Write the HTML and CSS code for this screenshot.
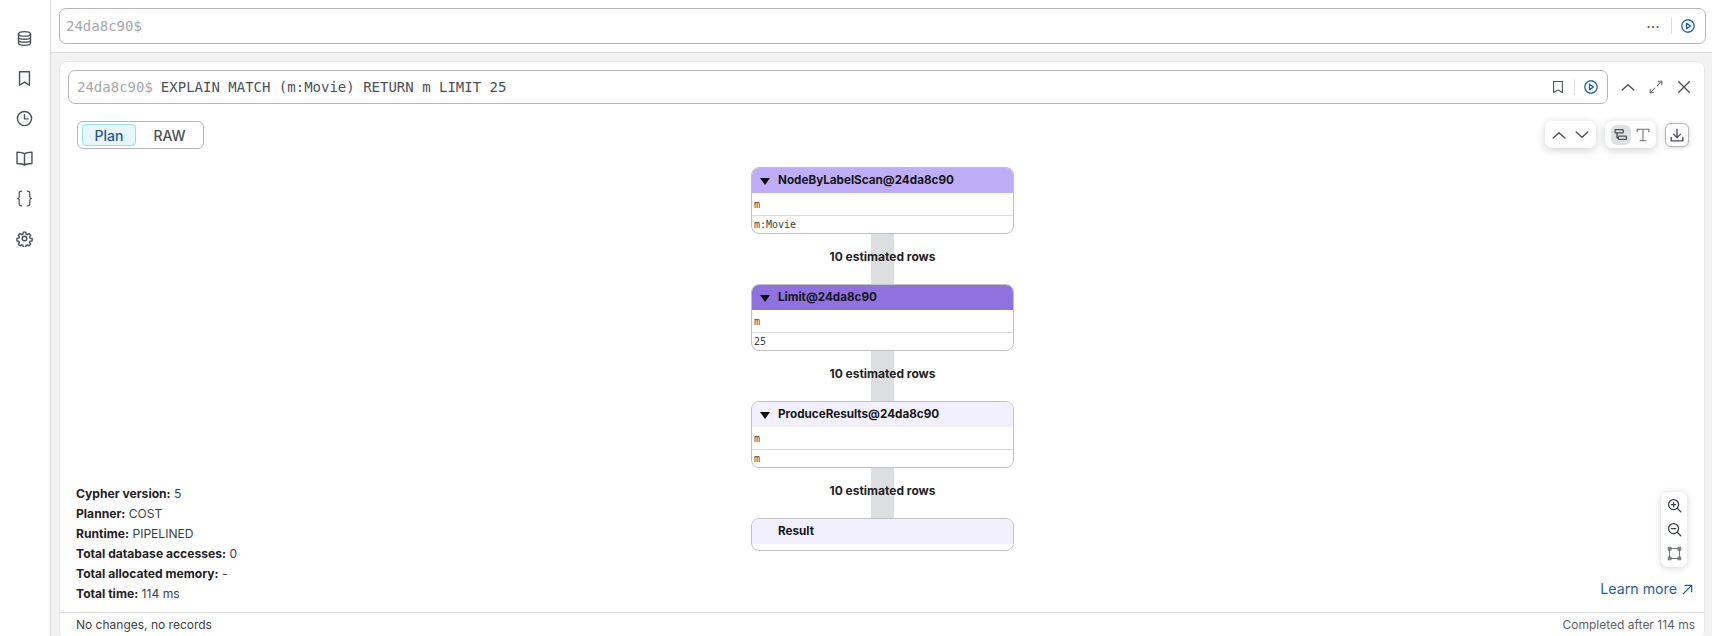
FILE: index.html
```html
<!DOCTYPE html>
<html lang="en">
<head>
<meta charset="utf-8">
<title>Query plan</title>
<link rel="stylesheet" href="styles.css">
</head>
<body>
<div class="app">
  <nav class="sidebar">
    <svg class="nav-icon" viewBox="0 0 24 24"><ellipse cx="12" cy="5.5" rx="8.5" ry="3.2"/><path d="M3.5 5.5v13c0 1.800 3.800 3.200 8.500 3.200s8.500-1.400 8.500-3.200v-13M3.500 9.800c0 1.800 3.800 3.200 8.500 3.200s8.500-1.400 8.500-3.200M3.500 14.200c0 1.800 3.800 3.200 8.500 3.200s8.500-1.400 8.500-3.200"/></svg>
    <svg class="nav-icon" viewBox="0 0 24 24"><path d="M5 2.500h14v19l-7-4.500-7 4.500z"/></svg>
    <svg class="nav-icon" viewBox="0 0 24 24"><circle cx="12" cy="12" r="10"/><path d="M12 6.500V12.500h5"/></svg>
    <svg class="nav-icon" viewBox="0 0 24 24"><path d="M12 5.500C10 3.800 6 3 1.500 3v16c4.500 0 8.500.6 10.500 2.500 2-1.900 6-2.500 10.500-2.500V3C18 3 14 3.800 12 5.500zM12 5.500v16"/></svg>
    <svg class="nav-icon nav-thin" viewBox="0 0 24 24"><path d="M8 1.500c-2.500 0-3.500 1-3.500 3v5c0 1.500-.8 2.500-2.500 2.500 1.700 0 2.500 1 2.500 2.500v5c0 2 1 3 3.500 3M16 1.500c2.500 0 3.500 1 3.500 3v5c0 1.500.8 2.500 2.500 2.500-1.700 0-2.500 1-2.500 2.500v5c0 2-1 3-3.500 3"/></svg>
    <svg class="nav-icon" viewBox="0 0 24 24"><circle cx="12" cy="12" r="3.200"/><path d="M10.300 3h3.400l.5 2.700 1.800.8 2.300-1.500 2.400 2.400-1.500 2.300.8 1.800 2.700.5v3.400l-2.700.5-.8 1.800 1.500 2.300-2.400 2.400-2.300-1.500-1.800.8-.5 2.700h-3.400l-.5-2.700-1.800-.8-2.300 1.500-2.400-2.400 1.500-2.300-.8-1.800-2.700-.5v-3.400l2.700-.5.8-1.800-1.500-2.300 2.400-2.400 2.300 1.500 1.800-.8z"/></svg>
  </nav>
  <main class="main">
    <header class="topbar">
      <div class="editor editor-top">
        <span class="prompt">24da8c90$</span>
        <span class="spacer"></span>
        <span class="dots">···</span>
        <span class="divider"></span>
        <svg class="run" viewBox="0 0 24 24"><circle cx="12" cy="12" r="10.500" stroke-dasharray="3 .6"/><path d="M9.500 7.500l7 4.500-7 4.500z"/></svg>
      </div>
    </header>
    <section class="content">
      <article class="card">
        <div class="card-head">
          <div class="editor editor-inner">
            <span class="prompt">24da8c90$</span>
            <span class="query">EXPLAIN MATCH (m:Movie) RETURN m LIMIT 25</span>
            <span class="spacer"></span>
            <svg class="tool-icon" viewBox="0 0 24 24"><path d="M4.500 2.500h15v19l-7.500-4.500-7.500 4.500z"/></svg>
            <span class="divider divider-inner"></span>
            <svg class="run" viewBox="0 0 24 24"><circle cx="12" cy="12" r="10.500" stroke-dasharray="3 .6"/><path d="M9.500 7.500l7 4.500-7 4.500z"/></svg>
          </div>
          <div class="head-actions">
            <svg class="tool-icon tool-bold" viewBox="0 0 24 24"><path d="M2 17l10-9 10 9"/></svg>
            <svg class="tool-icon tool-light" viewBox="0 0 24 24"><path d="M14 10l8-8M16 2h6v6M10 14l-8 8M2 16v6h6"/></svg>
            <svg class="tool-icon tool-bold" viewBox="0 0 24 24"><path d="M3 3l18 18M21 3L3 21"/></svg>
          </div>
        </div>
        <div class="plan-area">
          <div class="tabs">
            <span class="tab tab-active">Plan</span>
            <span class="tab">RAW</span>
          </div>
          <div class="tools">
            <div class="tool-group">
              <svg class="tool-icon tool-bold" viewBox="0 0 24 24"><path d="M2 17l10-9 10 9"/></svg>
              <svg class="tool-icon tool-bold" viewBox="0 0 24 24"><path d="M2 7l10 9 10-9"/></svg>
            </div>
            <div class="tool-group">
              <span class="tool-on"><svg class="tool-icon tool-bold" viewBox="0 0 24 24"><rect x="2" y="3" width="15" height="6" rx="1"/><rect x="8" y="15" width="15" height="6" rx="1"/><path d="M5.500 9v9H8"/></svg></span>
              <svg class="tool-icon tool-light" viewBox="0 0 24 24"><path d="M2 6V2h20v4M12 2v20M7 22h10"/></svg>
            </div>
            <div class="tool-single">
              <svg class="tool-icon tool-bold" viewBox="0 0 24 24"><path d="M12 2v14M6 10.500l6 6 6-6M2 16v6h20v-6"/></svg>
            </div>
          </div>
          <div class="plan">
            <div class="node">
              <div class="node-head head-scan"><span class="caret"></span>NodeByLabelScan@24da8c90</div>
              <div class="node-row">m</div>
              <div class="node-row row-last">m:Movie</div>
            </div>
            <div class="edge"><span class="edge-label">10 estimated rows</span></div>
            <div class="node">
              <div class="node-head head-limit"><span class="caret"></span>Limit@24da8c90</div>
              <div class="node-row">m</div>
              <div class="node-row row-last">25</div>
            </div>
            <div class="edge"><span class="edge-label">10 estimated rows</span></div>
            <div class="node">
              <div class="node-head head-light"><span class="caret"></span>ProduceResults@24da8c90</div>
              <div class="node-row">m</div>
              <div class="node-row row-last">m</div>
            </div>
            <div class="edge"><span class="edge-label">10 estimated rows</span></div>
            <div class="node node-result">
              <div class="node-head head-light"><span class="caret caret-none"></span>Result</div>
            </div>
          </div>
          <dl class="stats">
            <div><dt>Cypher version:</dt> <dd>5</dd></div>
            <div><dt>Planner:</dt> <dd>COST</dd></div>
            <div><dt>Runtime:</dt> <dd>PIPELINED</dd></div>
            <div><dt>Total database accesses:</dt> <dd>0</dd></div>
            <div><dt>Total allocated memory:</dt> <dd>-</dd></div>
            <div><dt>Total time:</dt> <dd>114 ms</dd></div>
          </dl>
          <div class="zoom-group">
            <svg class="zoom-icon" viewBox="0 0 24 24"><circle cx="10.500" cy="10.500" r="8"/><path d="M16.500 16.500l5.500 5.500M7 10.500h7M10.500 7v7"/></svg>
            <svg class="zoom-icon" viewBox="0 0 24 24"><circle cx="10.500" cy="10.500" r="8"/><path d="M16.500 16.500l5.500 5.500M7 10.500h7"/></svg>
            <svg class="zoom-icon zoom-fit" viewBox="0 0 24 24"><rect x="4" y="4" width="16" height="16" stroke-dasharray="2 1.500"/><rect x="2" y="2" width="4.500" height="4.500" rx="1"/><rect x="17.500" y="2" width="4.500" height="4.500" rx="1"/><rect x="2" y="17.500" width="4.500" height="4.500" rx="1"/><rect x="17.500" y="17.500" width="4.500" height="4.500" rx="1"/></svg>
          </div>
          <a class="learn">Learn more <svg class="learn-icon" viewBox="0 0 12 12"><path d="M1.500 10.500l9-9M3.500 1.500h7v7"/></svg></a>
        </div>
        <footer class="status">
          <span>No changes, no records</span>
          <span class="status-right">Completed after 114 ms</span>
        </footer>
      </article>
    </section>
  </main>
</div>
</body>
</html>
```
FILE: styles.css
```css
* { box-sizing: border-box; }
html, body { margin: 0; height: 100%; }
body { font-family: "Inter", "Liberation Sans", sans-serif; color: #2b2f36; background: #fff; overflow: hidden; }
svg { fill: none; stroke: currentColor; stroke-width: 1.8; stroke-linecap: round; stroke-linejoin: round; flex: none; display: block; }

.app { display: flex; height: 636px; }

.sidebar { width: 51px; flex: none; border-right: 1px solid #dcdde0; display: flex; flex-direction: column; align-items: center; gap: 23px; padding-top: 30px; padding-right: 1px; }
.nav-icon { width: 17px; height: 17px; color: #4d5157; stroke-width: 2; }
.nav-thin { stroke-width: 1.7; }

.main { flex: 1; min-width: 0; display: flex; flex-direction: column; }
.topbar { height: 53px; flex: none; padding: 8px 6px 0 8px; border-bottom: 1px solid #dcdde0; }
.content { flex: 1; background: #f2f2f3; padding: 8px 7px 0 8px; min-height: 0; }

.editor { display: flex; align-items: center; border: 1px solid #b4b6bb; border-radius: 7px; background: #fff; font-family: "DejaVu Sans Mono", "Liberation Mono", monospace; font-size: 14px; }
.editor-top { height: 36px; padding: 0 10px 0 6px; }
.prompt { color: #a6a8ae; }
.query { color: #4d5157; margin-left: 8px; }
.spacer { flex: 1; }
.dots { color: #5a5e65; font-family: "Inter", sans-serif; font-size: 12px; font-weight: 700; letter-spacing: .5px; }
.divider { width: 1px; height: 16px; background: #dcdde0; margin: 0 9px 0 11px; }
.divider-inner { margin: 0 9px 0 9px; }
.run { width: 14px; height: 14px; color: #1f5f96; stroke-width: 2.2; }

.card { height: 100%; background: #fff; border: 1px solid #e8e8ea; border-bottom: 0; border-radius: 8px 8px 5px 5px; display: flex; flex-direction: column; }
.card-head { display: flex; align-items: center; padding: 8px 0 0 8px; flex: none; }
.editor-inner { flex: 1; height: 34px; padding: 0 9px 0 8px; }
.head-actions { width: 96px; flex: none; display: flex; gap: 14px; padding-left: 13px; }
.tool-icon { width: 14px; height: 14px; color: #4d5157; }
.tool-bold { stroke-width: 2.4; }
.tool-light { color: #6a6e75; }

.plan-area { position: relative; flex: 1; min-height: 0; }

.tabs { position: absolute; left: 17px; top: 17px; width: 127px; height: 28px; border: 1px solid #b4b6bb; border-radius: 6px; display: flex; align-items: center; padding-left: 4px; font-size: 14px; font-weight: 500; background: #fff; }
.tab { width: 54px; height: 22px; flex: none; display: flex; align-items: center; justify-content: center; color: #4d5157; }
.tab + .tab { width: 67px; }
.tab-active { background: #e7f6fb; border: 1px solid #99dfeb; border-radius: 4px; color: #1f5a8a; }

.tools { position: absolute; right: 15px; top: 17px; display: flex; align-items: center; gap: 9px; }
.tool-group { width: 51px; height: 27px; background: #fff; border-radius: 7px; box-shadow: 0 2px 8px rgba(30, 35, 45, .22); display: flex; align-items: center; justify-content: space-around; padding: 0 3px; }
.tool-on { width: 20px; height: 20px; border-radius: 6px; background: #dfe0e2; display: flex; align-items: center; justify-content: center; }
.tool-on .tool-icon { width: 13px; height: 13px; }
.tool-single { width: 24px; height: 24px; border: 1px solid #b4b6bb; border-radius: 6px; background: #fff; display: flex; align-items: center; justify-content: center; box-shadow: 0 1px 4px rgba(30, 35, 45, .18); }

.plan { position: absolute; top: 63px; left: 691px; width: 263px; display: flex; flex-direction: column; }
.node { border: 1px solid #c1c1c8; border-radius: 8px; overflow: hidden; background: #fff; position: relative; }
.node-head { height: 25px; display: flex; align-items: center; font-size: 11.700px; font-weight: 700; color: #14161a; line-height: 1; padding-top: 1px; }
.caret { width: 0; height: 0; margin: 0 8px 0 8px; border-left: 5px solid transparent; border-right: 5px solid transparent; border-top: 7px solid #0c0d10; flex: none; }
.caret-none { border-top-color: transparent; }
.head-scan { background: #c0adf7; }
.head-limit { background: #8f71e0; }
.head-light { background: #f3f0fd; }
.node-row { height: 23px; padding-left: 2px; display: flex; align-items: center; font-family: "DejaVu Sans Mono", "Liberation Mono", monospace; font-size: 10px; color: #3c3f45; border-bottom: 1px solid #dcdde0; }
.row-last { height: 17px; border-bottom: 0; }
.node-result { height: 33px; }
.edge { height: 50px; display: flex; align-items: center; justify-content: center; position: relative; background: linear-gradient(#dddee0, #dddee0) center / 23px 100% no-repeat; }
.edge-label { font-size: 12px; font-weight: 700; color: #1f2126; line-height: 1; position: relative; top: -2px; }

.stats { position: absolute; left: 16px; bottom: 8px; margin: 0; font-size: 12.100px; line-height: 20px; color: #3c3f45; }
.stats dt { display: inline; font-weight: 700; color: #1f2126; }
.stats dd { display: inline; margin: 0; }

.zoom-group { position: absolute; right: 17px; bottom: 45px; width: 26px; height: 75px; background: #fff; border-radius: 7px; box-shadow: 0 1px 7px rgba(30, 35, 45, .2); display: flex; flex-direction: column; align-items: center; justify-content: center; gap: 9px; }
.zoom-icon { width: 15px; height: 15px; color: #3c3f45; stroke-width: 2; }
.zoom-fit { color: #6e7279; stroke-width: 1.8; }

.learn { position: absolute; right: 11px; bottom: 14px; display: flex; align-items: center; gap: 5px; font-size: 14.200px; line-height: 18px; color: #2a5f95; }
.learn-icon { width: 11px; height: 11px; stroke-width: 1.4; }

.status { height: 24px; flex: none; border-top: 1px solid #dcdde0; display: flex; align-items: center; justify-content: space-between; padding: 0 9px 0 16px; font-size: 12px; color: #3c3f45; }
.status-right { color: #5d6167; }
```
